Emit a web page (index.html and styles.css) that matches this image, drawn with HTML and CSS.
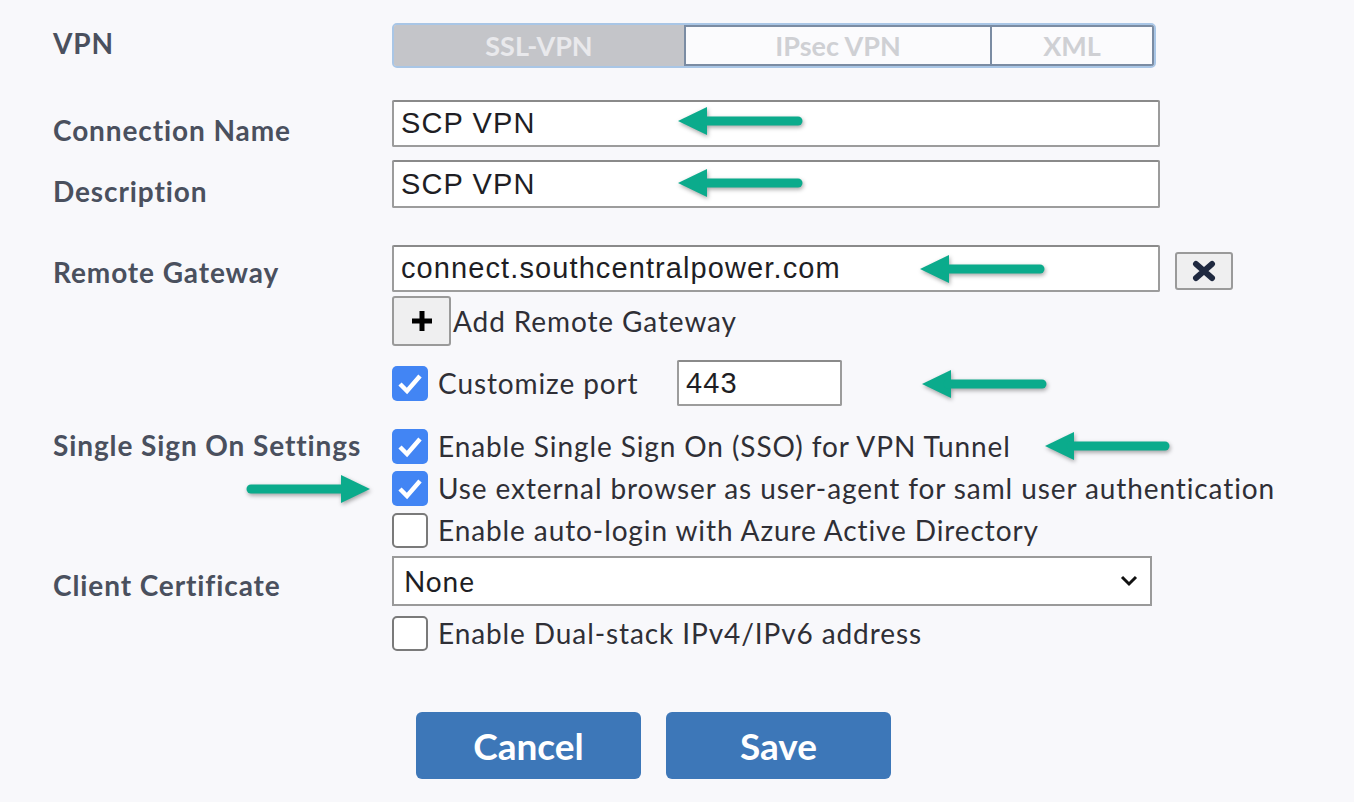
FILE: index.html
```html
<!DOCTYPE html>
<html lang="en">
<head>
    <meta charset="UTF-8">
    <title>VPN Settings</title>
    <link rel="stylesheet" href="styles.css">
</head>
<body>
<div class="page">
    <div class="row row-vpn">
        <div class="label">VPN</div>
        <div class="tabs">
            <div class="tab active">SSL-VPN</div>
            <div class="tab tab-ipsec">IPsec VPN</div>
            <div class="tab tab-xml">XML</div>
        </div>
    </div>

    <div class="row row-name">
        <div class="label">Connection Name</div>
        <input type="text" class="text-input" value="SCP VPN">
    </div>

    <div class="row row-desc">
        <div class="label">Description</div>
        <input type="text" class="text-input" value="SCP VPN">
    </div>

    <div class="row row-gateway">
        <div class="label">Remote Gateway</div>
        <div class="control">
            <div class="gateway-line">
                <input type="text" class="text-input" value="connect.southcentralpower.com">
                <button type="button" class="btn-icon btn-remove">
                    <svg width="26" height="22" viewBox="0 0 26 22"><path d="M5 4L21 18M21 4L5 18" stroke="#1f2940" stroke-width="6" stroke-linecap="round"/></svg>
                </button>
            </div>
            <div class="add-line">
                <button type="button" class="btn-icon btn-add">
                    <svg width="22" height="22" viewBox="0 0 22 22"><path d="M11 1v20M1 11h20" stroke="#000" stroke-width="5"/></svg>
                </button>
                <span class="add-text">Add Remote Gateway</span>
            </div>
            <div class="port-line">
                <label class="check"><span class="box checked"></span>Customize port</label>
                <input type="text" class="text-input port-input" value="443">
            </div>
        </div>
    </div>

    <div class="row row-sso">
        <div class="label">Single Sign On Settings</div>
        <div class="control">
            <label class="check check-row"><span class="box checked"></span>Enable Single Sign On (SSO) for VPN Tunnel</label>
            <label class="check check-row"><span class="box checked"></span>Use external browser as user-agent for saml user authentication</label>
            <label class="check check-row"><span class="box"></span>Enable auto-login with Azure Active Directory</label>
        </div>
    </div>

    <div class="row row-cert">
        <div class="label">Client Certificate</div>
        <div class="control">
            <div class="select">
                <span>None</span>
                <svg width="18" height="12" viewBox="0 0 18 12"><path d="M2 2l7 7 7-7" fill="none" stroke="#111" stroke-width="3"/></svg>
            </div>
            <label class="check check-row dual"><span class="box"></span>Enable Dual-stack IPv4/IPv6 address</label>
        </div>
    </div>

    <div class="actions">
        <button type="button" class="btn-primary">Cancel</button>
        <button type="button" class="btn-primary">Save</button>
    </div>

    <!-- callout arrows -->
    <svg class="arrow" style="left:678px;top:104px" width="126" height="36" viewBox="0 0 126 36"><path d="M0 17L29 3V31Z" fill="#0bab8c"/><path d="M26 17H120" stroke="#0bab8c" stroke-width="9" stroke-linecap="round"/></svg>
    <svg class="arrow" style="left:678px;top:166px" width="126" height="36" viewBox="0 0 126 36"><path d="M0 17L29 3V31Z" fill="#0bab8c"/><path d="M26 17H120" stroke="#0bab8c" stroke-width="9" stroke-linecap="round"/></svg>
    <svg class="arrow" style="left:920px;top:252px" width="126" height="36" viewBox="0 0 126 36"><path d="M0 17L29 3V31Z" fill="#0bab8c"/><path d="M26 17H120" stroke="#0bab8c" stroke-width="9" stroke-linecap="round"/></svg>
    <svg class="arrow" style="left:922px;top:367px" width="126" height="36" viewBox="0 0 126 36"><path d="M0 17L29 3V31Z" fill="#0bab8c"/><path d="M26 17H120" stroke="#0bab8c" stroke-width="9" stroke-linecap="round"/></svg>
    <svg class="arrow" style="left:1045px;top:429px" width="126" height="36" viewBox="0 0 126 36"><path d="M0 17L29 3V31Z" fill="#0bab8c"/><path d="M26 17H120" stroke="#0bab8c" stroke-width="9" stroke-linecap="round"/></svg>
    <svg class="arrow" style="left:245px;top:472px" width="126" height="36" viewBox="0 0 126 36"><path d="M125 17L96 3V31Z" fill="#0bab8c"/><path d="M99 17H6" stroke="#0bab8c" stroke-width="9" stroke-linecap="round"/></svg>
</div>
</body>
</html>
```

FILE: styles.css
```css
html, body {
    margin: 0;
    background-color: #f8f8fb;
}
.page {
    position: relative;
    width: 1354px;
    height: 802px;
    padding: 23px 0 0 53px;
    box-sizing: border-box;
    font-family: Lato, "Open Sans", sans-serif;
}
.row {
    display: flex;
    align-items: flex-start;
}
.label {
    width: 339px;
    flex: none;
    font-weight: bold;
    font-size: 28px;
    letter-spacing: 0.9px;
    line-height: 32px;
    color: #4a505e;
}
.control {
    display: flex;
    flex-direction: column;
}

/* tabs */
.row-vpn {
    margin-bottom: 32px;
}
.row-vpn .label {
    padding-top: 4px;
}
.tabs {
    display: flex;
    width: 764px;
    height: 45px;
    box-sizing: border-box;
    border: 2px solid #a9c6e6;
    border-radius: 5px;
    overflow: hidden;
}
.tab {
    display: flex;
    align-items: center;
    justify-content: center;
    width: 308px;
    box-sizing: border-box;
    background: #fbfbfd;
    border: 2px solid #7b8ca3;
    color: #cfd0d4;
    font-weight: bold;
    font-size: 27px;
}
.tab.active {
    width: 290px;
    background: #c4c5c9;
    border-color: #c4c5c9;
    color: #e9e9ec;
}
.tab-xml {
    width: 162px;
    border-left: none;
}

/* inputs */
.text-input {
    width: 768px;
    height: 47px;
    box-sizing: border-box;
    padding: 0 7px;
    border: 2px solid #9c9c9c;
    border-top-color: #8a8a8a;
    border-radius: 2px;
    background: #fff;
    font-family: "Liberation Sans", Arial, sans-serif;
    font-size: 29px;
    letter-spacing: 1.1px;
    color: #1e1e24;
    outline: none;
}
.row-name {
    margin-bottom: 13px;
}
.row-name .label {
    padding-top: 14px;
}
.row-desc {
    margin-bottom: 37px;
}
.row-desc .text-input {
    height: 48px;
}
.row-desc .label {
    padding-top: 15px;
}
.row-gateway .label {
    padding-top: 11px;
}
.gateway-line {
    display: flex;
    align-items: center;
}
.btn-icon {
    flex: none;
    display: flex;
    align-items: center;
    justify-content: center;
    padding: 0;
    background: #efeff0;
    border: 2px solid #9a9a9a;
    border-radius: 3px;
    cursor: pointer;
}
.btn-remove {
    width: 58px;
    height: 38px;
    margin-left: 15px;
    margin-top: 5px;
}
.add-line {
    display: flex;
    align-items: center;
    margin-top: 4px;
}
.btn-add {
    width: 59px;
    height: 50px;
}
.add-text {
    margin-left: 2px;
    font-size: 28px;
    letter-spacing: 0.9px;
    color: #2f2f36;
}
.port-line {
    display: flex;
    align-items: center;
    margin-top: 14px;
}
.port-line .check {
    width: 285px;
}
.port-input {
    width: 165px;
    height: 46px;
}

/* checkboxes */
.check {
    display: flex;
    align-items: center;
    font-size: 28px;
    letter-spacing: 0.9px;
    line-height: 32px;
    color: #2f2f36;
}
.check-row {
    height: 42px;
}
.box {
    flex: none;
    width: 36px;
    height: 35px;
    margin-right: 10px;
    box-sizing: border-box;
    border: 2px solid #7a7a7a;
    border-radius: 5px;
    background: #fff;
}
.box.checked {
    border: none;
    background: #4285f4 url("data:image/svg+xml;utf8,<svg xmlns='http://www.w3.org/2000/svg' width='36' height='35' viewBox='0 0 36 35'><path d='M8 18l7 7 13-15' fill='none' stroke='white' stroke-width='4.5'/></svg>") no-repeat center;
}
.row-sso {
    margin-top: 19px;
}
.row-sso .label {
    padding-top: 4px;
}

/* select */
.row-cert {
    margin-top: 5px;
}
.row-cert .label {
    padding-top: 13px;
}
.select {
    display: flex;
    align-items: center;
    justify-content: space-between;
    width: 760px;
    height: 50px;
    box-sizing: border-box;
    padding: 0 12px 0 10px;
    border: 2px solid #9a9a9a;
    background: #fff;
    font-size: 28px;
    letter-spacing: 0.9px;
    color: #1e1e24;
}
.dual {
    margin-top: 6px;
}

/* buttons */
.actions {
    display: flex;
    gap: 25px;
    margin: 58px 0 0 363px;
}
.btn-primary {
    width: 225px;
    height: 67px;
    border: none;
    border-radius: 6px;
    background: #3d77b8;
    color: #fff;
    font-family: Lato, sans-serif;
    font-weight: bold;
    font-size: 37px;
    cursor: pointer;
}

.arrow {
    position: absolute;
    filter: drop-shadow(1px 2px 2px rgba(0, 0, 0, 0.35));
}
```
